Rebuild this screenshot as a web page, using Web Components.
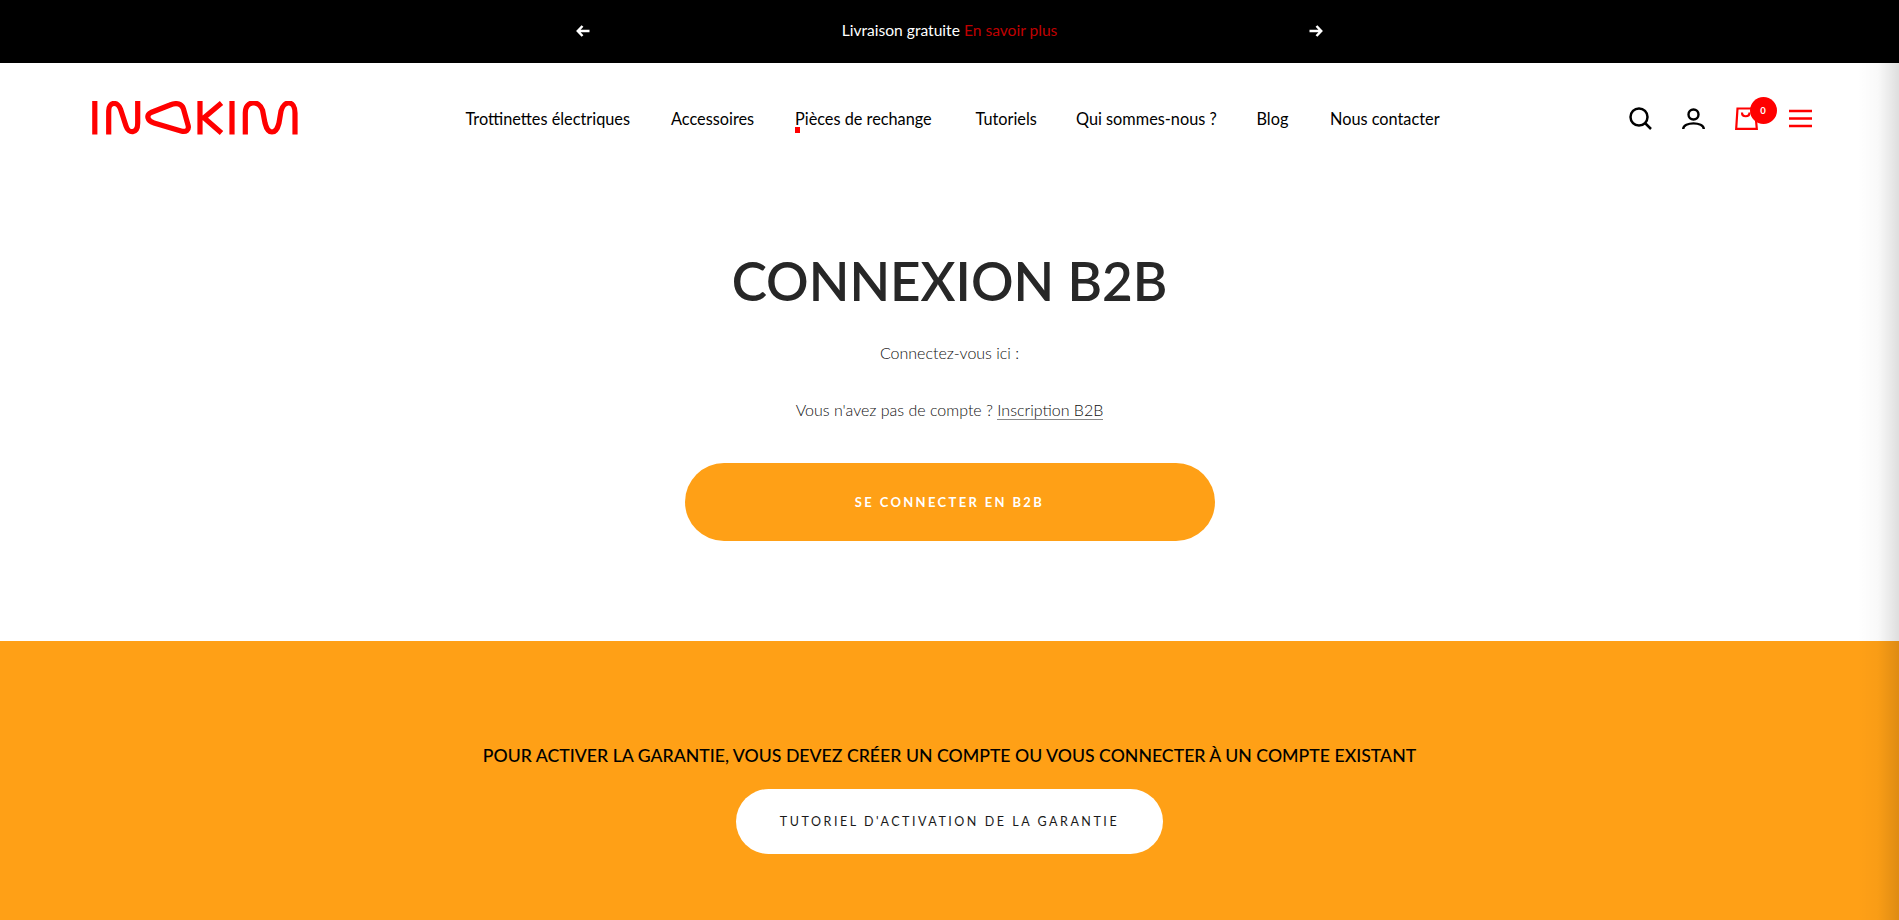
<!DOCTYPE html>
<html lang="fr">
<head>
<meta charset="utf-8">
<title>Connexion B2B</title>
<style>
  html, body { margin: 0; height: 100%; }
  body {
    font-family: "Lato", "Open Sans", sans-serif;
    background: #fff;
    color: #272727;
    overflow: hidden;
    position: relative;
  }
</style>
</head>
<body>
<announcement-bar>
  Livraison gratuite <a slot="link">En savoir plus</a>
</announcement-bar>
<site-header></site-header>
<login-section></login-section>
<warranty-band></warranty-band>
<edge-shadow></edge-shadow>

<script>
class AnnouncementBar extends HTMLElement {
    constructor() {
        super();
        this.attachShadow({ mode: 'open' });
        this.shadowRoot.innerHTML = `
        <style>
          :host { display: flex; height: 63px; box-sizing: border-box; padding-bottom: 3px; background: #000; color: #fff; justify-content: center; align-items: center; font-size: 15.6px; }
          .inner { width: 747px; display: flex; justify-content: space-between; align-items: center; }
          svg { width: 14px; height: 12px; display: block; margin-top: 1px; }
          .msg { white-space: nowrap; }
          ::slotted(a) { color: #c00000; }
        </style>
        <div class="inner">
          <svg viewBox="0 0 14 12" fill="none" stroke="#fff" stroke-width="2.500"><path d="M13.500 6H2.500M6.500 1 1.800 6l4.700 5"/></svg>
          <span class="msg"><slot></slot><slot name="link"></slot></span>
          <svg viewBox="0 0 14 12" fill="none" stroke="#fff" stroke-width="2.500"><path d="M.5 6h11M7.500 1l4.700 5-4.700 5"/></svg>
        </div>`;
    }
}

class SiteHeader extends HTMLElement {
    constructor() {
        super();
        this.attachShadow({ mode: 'open' });
        const links = [
            ['Trottinettes électriques', 165], ['Accessoires', 83.5], ['Pièces de rechange', 140], ['Tutoriels', 60],
            ['Qui sommes-nous ?', 140], ['Blog', 33], ['Nous contacter', 108.5]
        ];
        const nav = links.map(([l, w], i) => `<a class="${i === 2 ? 'on' : ''}" style="width:${w}px">${l}</a>`).join('');
        this.shadowRoot.innerHTML = `
        <style>
          :host { display: grid; grid-template-columns: 1fr auto 1fr; height: 112px; align-items: center; padding: 0 87px 0 92px; color: #000; }
          .logo { width: 206px; height: 34px; display: block; margin-top: -3px; }
          nav { display: flex; gap: 40.500px; font-size: 16.300px; white-space: nowrap; margin-top: -2px; }
          nav a { position: relative; display: block; }
          nav a.on::after { content: ''; position: absolute; left: 0; bottom: -5px; width: 5px; height: 6px; background: #f00; }
          .icons { display: flex; align-items: center; justify-content: flex-end; gap: 30.500px; margin-top: -1px; }
          .icons svg { display: block; }
          .cart { position: relative; display: block; margin-left: -1px; margin-right: 1px; }
          .badge { position: absolute; top: -10px; left: 15px; width: 27px; height: 27px; border-radius: 50%; background: #f00; color: #fff; font-size: 9.500px; font-weight: 700; display: flex; align-items: center; justify-content: center; }
        </style>
        <svg class="logo" viewBox="0 0 206 34" fill="none" stroke="#f00" stroke-width="5.200">
          <path d="M2.800 0v33.500"/>
          <path d="M16.700 33.500V10C16.700 0 26 .5 28.500 8L34 25c2.500 8 11.700 8 11.700-3V0"/>
          <path d="M59 11.500 78 4c7-3 12-1 13.500 4L96 24c1.500 5-2 7.500-7 6L62 22c-7-2-8-8-3-10.500z"/>
          <path d="M108 0v33.500M129.500 2 112 16.700 129.500 32"/>
          <path d="M140 0v33.500"/>
          <path d="M153.300 33.500V12c0-13 13.700-13 17.200-3l2.500 13c3 12 11 12 14 0l2-12c3-11 14-11 14 2v21.500"/>
        </svg>
        <nav>${nav}</nav>
        <div class="icons">
          <svg width="23" height="23" viewBox="0 0 23 23" fill="none" stroke="#000" stroke-width="2.500"><circle cx="10" cy="10" r="8.500"/><path d="M16 16l6 6"/></svg>
          <svg width="23" height="23" viewBox="0 0 23 23" fill="none" stroke="#000" stroke-width="2.400"><circle cx="11.500" cy="7.500" r="5"/><path d="M1.200 22c0-7.500 20.600-7.500 20.600 0"/></svg>
          <span class="cart">
            <svg width="23" height="23" viewBox="0 0 23 23" fill="none" stroke="#f00" stroke-width="2.200"><path d="M2.500 1.500h17.500l1.800 20.300H1.200z"/><path d="M7 5.500c0 5 7.500 5 7.500 0"/></svg>
            <span class="badge">0</span>
          </span>
          <svg width="23" height="23" viewBox="0 0 23 23" fill="none" stroke="#f00" stroke-width="2.500"><path d="M0 4h23M0 11.500h23M0 19h23"/></svg>
        </div>`;
    }
}

class LoginSection extends HTMLElement {
    constructor() {
        super();
        this.attachShadow({ mode: 'open' });
        this.shadowRoot.innerHTML = `
        <style>
          :host { display: flex; flex-direction: column; align-items: center; height: 466px; box-sizing: border-box; padding-top: 70px; color: #272727; }
          h1 { margin: 0; font-size: 53px; line-height: 72px; font-weight: 600; }
          p { margin: 0; font-size: 16px; line-height: 22px; font-weight: 300; color: #111; }
          .here { margin-top: 25px; }
          .signup { margin-top: 35px; }
          .signup a { border-bottom: 1px solid #8a8a8a; }
          button { margin-top: 42px; width: 530px; height: 78px; border: 0; border-radius: 39px; background: #ffa016; color: #fff; font: 700 13px "Lato", sans-serif; letter-spacing: 2.350px; padding: 0; }
        </style>
        <h1>CONNEXION B2B</h1>
        <p class="here">Connectez-vous ici :</p>
        <p class="signup">Vous n'avez pas de compte ? <a>Inscription B2B</a></p>
        <button>SE CONNECTER EN B2B</button>`;
    }
}

class WarrantyBand extends HTMLElement {
    constructor() {
        super();
        this.attachShadow({ mode: 'open' });
        this.shadowRoot.innerHTML = `
        <style>
          :host { display: flex; flex-direction: column; align-items: center; height: 279px; box-sizing: border-box; padding-top: 103px; background: #ffa016; color: #000; }
          p { margin: 0; font-size: 17.700px; line-height: 24px; font-weight: 500; white-space: nowrap; }
          a { margin-top: 21px; width: 427px; height: 65px; border-radius: 33px; background: #fff; color: #1a1a1a; display: flex; align-items: center; justify-content: center; font-size: 12.500px; letter-spacing: 2.530px; }
        </style>
        <p>POUR ACTIVER LA GARANTIE, VOUS DEVEZ CRÉER UN COMPTE OU VOUS CONNECTER À UN COMPTE EXISTANT</p>
        <a>TUTORIEL D'ACTIVATION DE LA GARANTIE</a>`;
    }
}

// soft shadow of the off-canvas drawer at the right edge
class EdgeShadow extends HTMLElement {
    constructor() {
        super();
        this.attachShadow({ mode: 'open' });
        this.shadowRoot.innerHTML = `
        <style>
          :host { position: absolute; top: 0; right: 0; bottom: 0; width: 42px; background: linear-gradient(to right, rgba(0,0,0,0), rgba(0,0,0,.025) 50%, rgba(0,0,0,.13)); pointer-events: none; }
        </style>`;
    }
}

customElements.define('announcement-bar', AnnouncementBar);
customElements.define('site-header', SiteHeader);
customElements.define('login-section', LoginSection);
customElements.define('warranty-band', WarrantyBand);
customElements.define('edge-shadow', EdgeShadow);
</script>
</body>
</html>
